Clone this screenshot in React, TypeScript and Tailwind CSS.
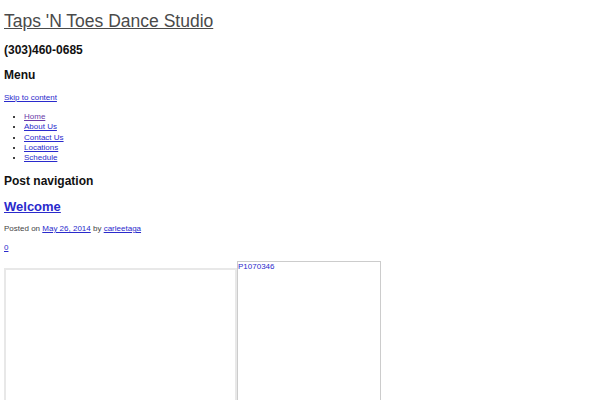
export default function App() {
  const menu = ["Home", "About Us", "Contact Us", "Locations", "Schedule"];

  return (
    <div className="h-[400px] overflow-hidden bg-white px-[4px] font-['Liberation_Sans',Arial,sans-serif] text-black">
      <h1 className="mt-[12px] text-[17.5px] leading-[18px] font-normal">
        <a href="#" className="text-[#4a4a4a] underline">Taps 'N Toes Dance Studio</a>
      </h1>

      <h2 className="mt-[13px] text-[12px] leading-[14px] font-bold text-[#111111]">(303)460-0685</h2>

      <h2 className="mt-[11px] text-[12px] leading-[14px] font-bold text-[#111111]">Menu</h2>

      <div className="mt-[11px] text-[8px] leading-[10px]">
        <a href="#" className="text-[#2a2acc] underline">Skip to content</a>
      </div>

      <ul className="mt-[9px] list-disc pl-[20px] text-[8px] leading-[10.3px]">
        {menu.map((item, i) => (
          <li key={item}>
            <a href="#" className={i === 0 ? "text-[#6a3aa8] underline" : "text-[#2a2acc] underline"}>
              {item}
            </a>
          </li>
        ))}
      </ul>

      <h2 className="mt-[10.5px] text-[12px] leading-[14px] font-bold text-[#111111]">Post navigation</h2>

      <h1 className="mt-[11px] text-[13px] leading-[16px] font-bold">
        <a href="#" className="text-[#2a2acc] underline">Welcome</a>
      </h1>

      <p className="mt-[9px] text-[8px] leading-[10px] text-[#444444]">
        Posted on{" "}
        <a href="#" className="text-[#2a2acc] underline">May 26, 2014</a>
        {" "}by{" "}
        <a href="#" className="text-[#2a2acc] underline">carleetaga</a>
      </p>

      <div className="mt-[9px] text-[8px] leading-[10px]">
        <a href="#" className="text-[#2a2acc] underline">0</a>
      </div>

      <div className="mt-[8px] flex items-start">
        <div className="mt-[7px] h-[200px] w-[233px] border-2 border-[#e8e8e8]" />
        <div className="h-[200px] w-[144px] border border-[#cccccc] text-[8px] leading-[10px] text-[#2a2acc]">
          P1070346
        </div>
      </div>
    </div>
  );
}
